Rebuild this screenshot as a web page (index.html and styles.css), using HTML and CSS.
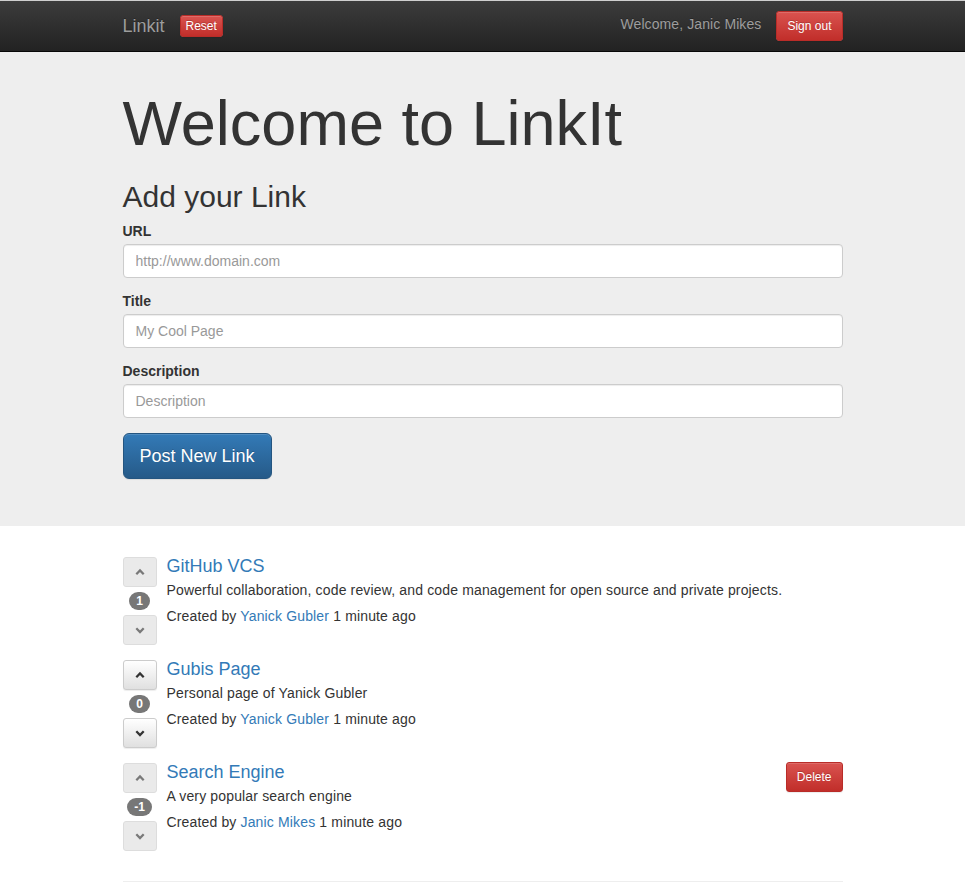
FILE: index.html
```html
<!DOCTYPE html>
<html>
<head>
<meta charset="utf-8">
<title>LinkIt</title>
<link rel="stylesheet" href="styles.css">
</head>
<body>
<nav class="navbar">
  <div class="container nav-inner">
    <div class="nav-left">
      <a class="brand" href="#">Linkit</a>
      <button class="btn btn-danger btn-xs">Reset</button>
    </div>
    <div class="nav-right">
      <span class="nav-text">Welcome, Janic Mikes</span>
      <button class="btn btn-danger btn-sm">Sign out</button>
    </div>
  </div>
</nav>

<section class="jumbotron">
  <div class="container">
    <h1>Welcome to LinkIt</h1>
    <h2>Add your Link</h2>
    <form class="link-form">
      <div class="form-group">
        <label>URL</label>
        <input class="form-control" type="text" placeholder="http://www.domain.com">
      </div>
      <div class="form-group">
        <label>Title</label>
        <input class="form-control" type="text" placeholder="My Cool Page">
      </div>
      <div class="form-group">
        <label>Description</label>
        <input class="form-control" type="text" placeholder="Description">
      </div>
      <button type="button" class="btn btn-primary btn-lg">Post New Link</button>
    </form>
  </div>
</section>

<main class="container">
  <ul class="links">
    <li class="media">
      <div class="vote">
        <button class="btn btn-default btn-sm btn-vote" disabled><svg class="chev" viewBox="0 0 12 12"><polyline points="2.3,8.2 6,4.5 9.7,8.2"/></svg></button>
        <div class="score"><span class="badge">1</span></div>
        <button class="btn btn-default btn-sm btn-vote" disabled><svg class="chev" viewBox="0 0 12 12"><polyline points="2.3,4.3 6,8 9.7,4.3"/></svg></button>
      </div>
      <div class="media-body">
        <h4><a href="#">GitHub VCS</a></h4>
        <p class="desc">Powerful collaboration, code review, and code management for open source and private projects.</p>
        <p class="meta">Created by <a href="#">Yanick Gubler</a> 1 minute ago</p>
      </div>
    </li>
    <li class="media">
      <div class="vote">
        <button class="btn btn-default btn-sm btn-vote"><svg class="chev" viewBox="0 0 12 12"><polyline points="2.3,8.2 6,4.5 9.7,8.2"/></svg></button>
        <div class="score"><span class="badge">0</span></div>
        <button class="btn btn-default btn-sm btn-vote"><svg class="chev" viewBox="0 0 12 12"><polyline points="2.3,4.3 6,8 9.7,4.3"/></svg></button>
      </div>
      <div class="media-body">
        <h4><a href="#">Gubis Page</a></h4>
        <p class="desc">Personal page of Yanick Gubler</p>
        <p class="meta">Created by <a href="#">Yanick Gubler</a> 1 minute ago</p>
      </div>
    </li>
    <li class="media">
      <div class="vote">
        <button class="btn btn-default btn-sm btn-vote" disabled><svg class="chev" viewBox="0 0 12 12"><polyline points="2.3,8.2 6,4.5 9.7,8.2"/></svg></button>
        <div class="score"><span class="badge">-1</span></div>
        <button class="btn btn-default btn-sm btn-vote" disabled><svg class="chev" viewBox="0 0 12 12"><polyline points="2.3,4.3 6,8 9.7,4.3"/></svg></button>
      </div>
      <div class="media-body">
        <h4><a href="#">Search Engine</a></h4>
        <p class="desc">A very popular search engine</p>
        <p class="meta">Created by <a href="#">Janic Mikes</a> 1 minute ago</p>
      </div>
      <button class="btn btn-danger btn-sm btn-delete">Delete</button>
    </li>
  </ul>
  <hr class="rule">
</main>
</body>
</html>
```

FILE: styles.css
```css
* { box-sizing: border-box; }

html, body {
  margin: 0;
  padding: 0;
}

body {
  font-family: "Liberation Sans", Arial, Helvetica, sans-serif;
  font-size: 14px;
  line-height: 20px;
  color: #333;
  background: #fff;
}

a { color: #337ab7; text-decoration: none; }

.container {
  width: 720px;
  margin: 0 auto;
}

/* navbar */
.navbar {
  border-top: 1px solid #cfcfcf;
  border-bottom: 1px solid #080808;
  background-image: linear-gradient(to bottom, #3c3c3c 0, #222 100%);
  height: 52px;
}

.nav-inner {
  height: 50px;
  display: flex;
  align-items: center;
  justify-content: space-between;
}

.nav-left, .nav-right {
  display: flex;
  align-items: center;
}

.brand {
  color: #9d9d9d;
  font-size: 18px;
  line-height: 20px;
  margin-right: 15px;
  text-shadow: 0 -1px 0 rgba(0,0,0,.25);
}

.nav-text {
  color: #9d9d9d;
  margin-right: 15px;
  padding-bottom: 4px;
  letter-spacing: 0.1px;
  text-shadow: 0 -1px 0 rgba(0,0,0,.25);
}

/* buttons */
.btn {
  display: inline-block;
  font-family: inherit;
  font-weight: normal;
  text-align: center;
  white-space: nowrap;
  vertical-align: middle;
  border: 1px solid transparent;
  cursor: pointer;
  margin: 0;
}

.btn-xs {
  padding: 1px 5px;
  font-size: 12px;
  line-height: 18px;
  border-radius: 3px;
}

.btn-sm {
  padding: 5px 10px;
  font-size: 12px;
  line-height: 18px;
  border-radius: 3px;
}

.btn-lg {
  padding: 10px 16px;
  font-size: 18px;
  line-height: 24px;
  border-radius: 6px;
}

.btn-danger {
  color: #fff;
  background-image: linear-gradient(to bottom, #d9534f 0, #c12e2a 100%);
  border-color: #b92c28;
  text-shadow: 0 -1px 0 rgba(0,0,0,.2);
  box-shadow: inset 0 1px 0 rgba(255,255,255,.15), 0 1px 1px rgba(0,0,0,.075);
}

.btn-primary {
  color: #fff;
  background-image: linear-gradient(to bottom, #337ab7 0, #265a88 100%);
  border-color: #245580;
  text-shadow: 0 -1px 0 rgba(0,0,0,.2);
  box-shadow: inset 0 1px 0 rgba(255,255,255,.15), 0 1px 1px rgba(0,0,0,.075);
}

.btn-default {
  color: #333;
  background-color: #fff;
  background-image: linear-gradient(to bottom, #fff 0, #e0e0e0 100%);
  border-color: #ccc;
  text-shadow: 0 1px 0 #fff;
  box-shadow: inset 0 1px 0 rgba(255,255,255,.15), 0 1px 1px rgba(0,0,0,.075);
}

.btn-default[disabled] {
  background-color: #e0e0e0;
  background-image: none;
  opacity: .65;
  box-shadow: none;
  cursor: not-allowed;
}

/* jumbotron */
.jumbotron {
  background: #eee;
  padding: 37px 0 47px;
}

.jumbotron h1 {
  margin: 0;
  font-size: 63px;
  line-height: 1.1;
  font-weight: 500;
  color: #333;
}

.jumbotron h2 {
  margin: 22px 0 8px;
  font-size: 30px;
  line-height: 1.1;
  font-weight: 500;
}

.form-group {
  margin-bottom: 13px;
}

.form-group label {
  display: block;
  font-weight: bold;
  margin-bottom: 3px;
}

.form-control {
  display: block;
  width: 100%;
  height: 34px;
  padding: 6px 12px;
  font-family: inherit;
  font-size: 14px;
  line-height: 20px;
  color: #555;
  background: #fff;
  border: 1px solid #ccc;
  border-radius: 4px;
  box-shadow: inset 0 1px 1px rgba(0,0,0,.075);
}

.form-control::placeholder { color: #999; }

.link-form .btn-lg { margin-top: 2px; }

/* links */
.links {
  list-style: none;
  margin: 31px 0 0;
  padding: 0;
}

.media {
  display: flex;
  align-items: flex-start;
  margin-bottom: 15px;
}

.vote {
  width: 34px;
  margin-right: 10px;
  display: flex;
  flex-direction: column;
}

.btn-vote {
  width: 34px;
  height: 30px;
  padding: 0;
  display: flex;
  align-items: center;
  justify-content: center;
}

.chev {
  width: 12px;
  height: 12px;
  fill: none;
  stroke: #333;
  stroke-width: 2.3;
}

.score {
  height: 28px;
  display: flex;
  align-items: center;
  justify-content: center;
}

.badge {
  display: inline-block;
  min-width: 10px;
  padding: 3px 7px;
  font-size: 12px;
  font-weight: bold;
  line-height: 1;
  color: #fff;
  text-align: center;
  background: #777;
  border-radius: 10px;
}

.media-body {
  flex: 1;
}

.media-body h4 {
  margin: 0 0 3px;
  font-size: 18px;
  line-height: 1.1;
  font-weight: 500;
}

.desc {
  margin: 0 0 6px;
  letter-spacing: 0.15px;
}

.meta {
  margin: 0;
  letter-spacing: 0.15px;
}

.btn-delete {
  margin-top: -1px;
}

.rule {
  margin: 30px 0 0;
  border: 0;
  border-top: 1px solid #eee;
}
```
